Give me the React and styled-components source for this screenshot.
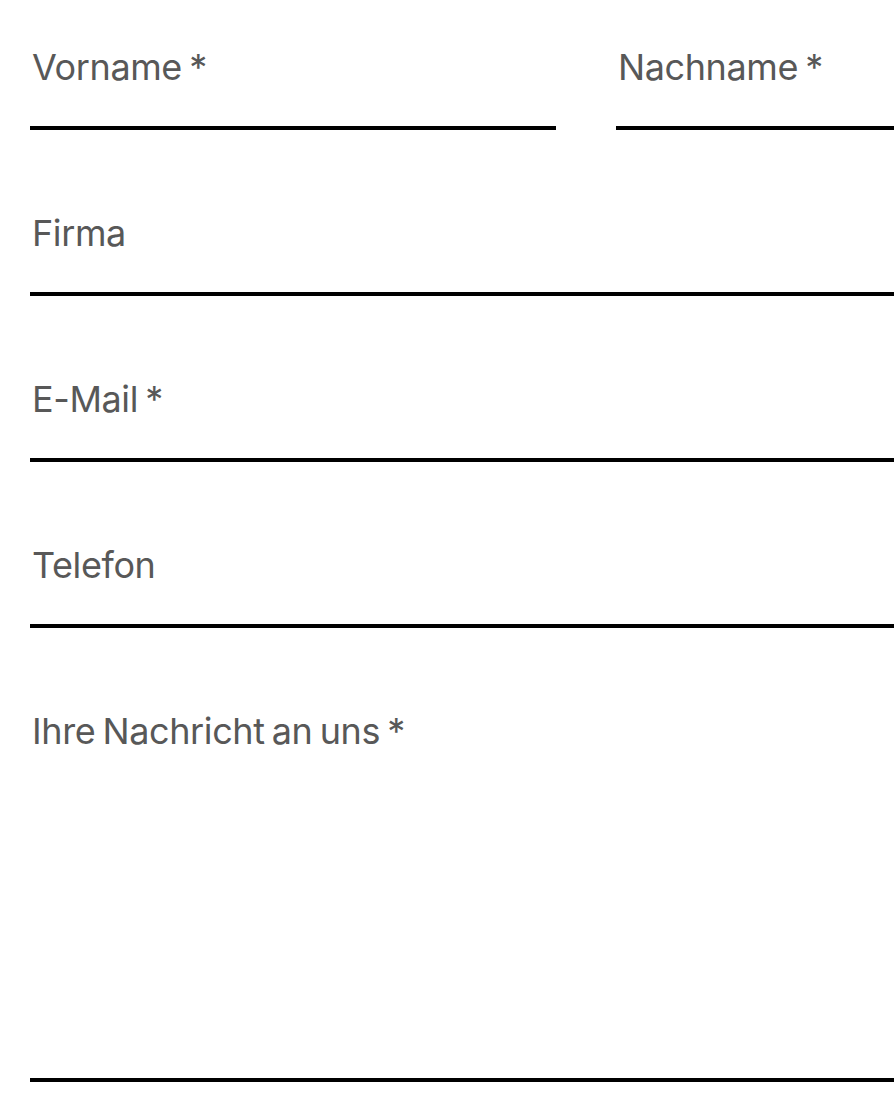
import styled, { createGlobalStyle } from "styled-components";

const GlobalStyle = createGlobalStyle`
  html, body {
    margin: 0;
    padding: 0;
    background: #ffffff;
    overflow: hidden;
  }
  * {
    box-sizing: border-box;
  }
`;

// the form is wider than the window, the right column is cut off like in the design
const Viewport = styled.div`
  width: 100%;
  overflow: hidden;
`;

const Form = styled.form`
  width: 1112px;
  padding-left: 30px;
  display: flex;
  flex-direction: column;
  gap: 36px;
  font-family: Inter, "Liberation Sans", sans-serif;
`;

const Row = styled.div`
  display: grid;
  grid-template-columns: 526px 526px;
  gap: 60px;
`;

const Field = styled.label`
  display: block;
  height: ${(props) => (props.tall ? "418px" : "130px")};
  padding: 45px 0 0 2px;
  border-bottom: 4px solid #000;
`;

const LabelText = styled.span`
  display: block;
  font-size: 36px;
  line-height: normal;
  font-weight: 400;
  color: #585858;
  letter-spacing: -0.4px;
  word-spacing: -2.5px;
`;

const fields = ["Firma", "E-Mail *", "Telefon"];

export default function App() {
  return (
    <>
      <GlobalStyle />
      <Viewport>
        <Form>
          <Row>
            <Field>
              <LabelText>Vorname *</LabelText>
            </Field>
            <Field>
              <LabelText>Nachname *</LabelText>
            </Field>
          </Row>
          {fields.map((f) => (
            <Field key={f}>
              <LabelText>{f}</LabelText>
            </Field>
          ))}
          <Field tall>
            <LabelText>Ihre Nachricht an uns *</LabelText>
          </Field>
        </Form>
      </Viewport>
    </>
  );
}
